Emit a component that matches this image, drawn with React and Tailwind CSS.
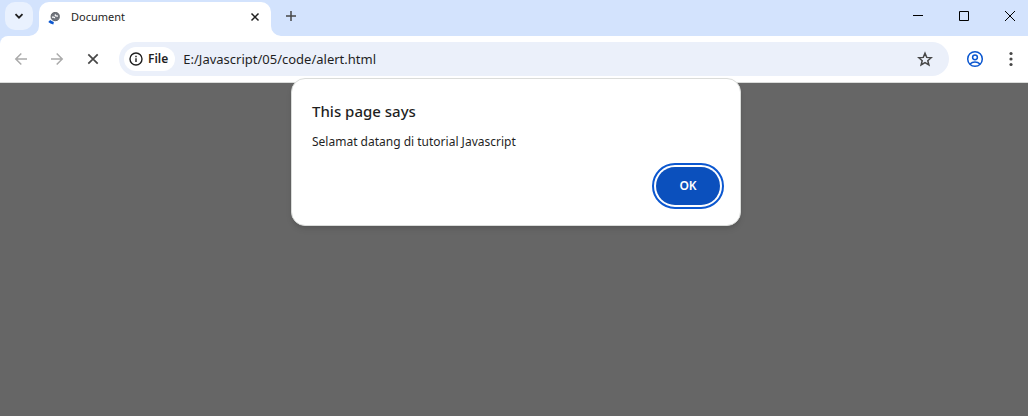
function Icon({ children, className = "size-4", box = 16 }) {
  return (
    <svg viewBox={`0 0 ${box} ${box}`} className={className} fill="none" stroke="currentColor" aria-hidden="true">
      {children}
    </svg>
  );
}

function TabStrip() {
  return (
    <header className="flex h-9 items-start bg-[#d3e3fd] pl-[5px]">
      <button aria-label="Search tabs" className="mt-0.5 flex size-7 items-center justify-center rounded-[10px] bg-[#e9f1fe] text-[#1f1f1f]">
        <Icon>
          <path d="M4.5 6.2 8 9.7l3.5-3.5" strokeWidth="1.8" />
        </Icon>
      </button>
      <div className="relative ml-1.5 mt-0.5 flex h-[34px] w-[232px] items-center rounded-t-[10px] bg-white px-2 text-[#1f1f1f]">
        <svg viewBox="0 0 10 10" className="absolute bottom-0 -left-2.5 size-2.5 fill-white" aria-hidden="true">
          <path d="M10 0v10H0A10 10 0 0 0 10 0Z" />
        </svg>
        <svg viewBox="0 0 10 10" className="absolute bottom-0 -right-2.5 size-2.5 fill-white" aria-hidden="true">
          <path d="M0 0v10h10A10 10 0 0 1 0 0Z" />
        </svg>
        <svg viewBox="0 0 16 16" className="mb-1 size-4" fill="none" aria-hidden="true">
          <circle cx="8.2" cy="7.6" r="4.1" fill="#70747c" stroke="#5f6368" />
          <path d="M5 8.2h1.6c.8 0 1.100.5 1.100 1.100M8.600 5.400c-.6.500-.6 1.300.2 1.400l2.200.4" stroke="#fff" strokeWidth="1.200" />
          <path d="M2.200 12c1 1 2.600 1.800 4.400 2.200" stroke="#0b57d0" strokeWidth="2.600" />
        </svg>
        <span className="mb-1 ml-2 flex-1 text-[11px]">Document</span>
        <button aria-label="Close tab" className="mb-1">
          <Icon>
            <path d="m4.5 4.5 7 7m0-7-7 7" strokeWidth="1.5" />
          </Icon>
        </button>
      </div>
      <button aria-label="New tab" className="ml-3 mt-2 text-[#474747]">
        <Icon>
          <path d="M8 3v10M3 8h10" strokeWidth="1.5" />
        </Icon>
      </button>
      <div className="ml-auto flex h-8 text-black">
        <button aria-label="Minimize" className="flex w-[46px] items-center justify-center">
          <Icon className="size-2.5" box={10}>
            <path d="M0 4.5h10" />
          </Icon>
        </button>
        <button aria-label="Maximize" className="flex w-[46px] items-center justify-center">
          <Icon className="size-2.5" box={10}>
            <path d="M.5.5h9v9h-9z" />
          </Icon>
        </button>
        <button aria-label="Close window" className="flex w-[41px] items-center pl-[18px]">
          <Icon className="size-2.5" box={10}>
            <path d="m0 0 10 10M10 0 0 10" />
          </Icon>
        </button>
      </div>
    </header>
  );
}

function Toolbar() {
  return (
    <div className="bg-[#d3e3fd]">
      <div className="flex h-[47px] items-center rounded-tl-lg border-b border-[#dadcda] bg-white pl-3 pr-2">
        <div className="flex gap-[18px]">
          <button aria-label="Back" className="text-[#ababab]">
            <Icon className="size-[18px]" box={18}>
              <path d="M15 9H4m5.3-5.5L3.8 9l5.5 5.5" strokeWidth="1.5" />
            </Icon>
          </button>
          <button aria-label="Forward" className="text-[#ababab]">
            <Icon className="size-[18px]" box={18}>
              <path d="M3 9h11M8.7 3.5 14.2 9l-5.5 5.5" strokeWidth="1.5" />
            </Icon>
          </button>
          <button aria-label="Stop loading" className="text-[#474747]">
            <Icon className="size-[18px]" box={18}>
              <path d="m4.3 4.3 9.4 9.4m0-9.4-9.4 9.4" strokeWidth="1.7" />
            </Icon>
          </button>
        </div>
        <div className="ml-[17px] flex h-[34px] flex-1 items-center rounded-full bg-[#ebf0fa] pl-[5px] pr-4">
          <button className="flex h-6 items-center gap-1 rounded-full bg-white pl-1 pr-[7px] text-xs font-semibold text-[#1f1f1f]">
            <Icon>
              <circle cx="8" cy="8" r="6" strokeWidth="1.4" />
              <path d="M8 7.3V11M8 4.8v1.4" strokeWidth="1.4" />
            </Icon>
            File
          </button>
          <input
            aria-label="Address"
            defaultValue="E:/Javascript/05/code/alert.html"
            className="ml-2 min-w-0 flex-1 bg-transparent pt-px text-[13px] text-[#1f1f1f] outline-none"
          />
          <button aria-label="Bookmark this page" className="text-[#474747]">
            <Icon>
              <path d="m8 2.200 1.700 4.200 4.500.3-3.400 3 1.100 4.300L8 11.600 4.100 14l1.100-4.300-3.400-3 4.500-.3Z" strokeWidth="1.5" />
            </Icon>
          </button>
        </div>
        <button aria-label="Profile" className="ml-[17px] text-[#0b57d0]">
          <Icon className="size-[18px]" box={18}>
            <circle cx="9" cy="9" r="7.3" strokeWidth="1.5" />
            <circle cx="9" cy="7.3" r="2.4" strokeWidth="1.5" />
            <path d="M4 14c1.3-1.3 3-2 5-2s3.7.7 5 2" strokeWidth="1.5" />
          </Icon>
        </button>
        <button aria-label="Menu" className="ml-[18px] text-[#474747]">
          <svg viewBox="0 0 18 18" className="size-[18px] fill-current" aria-hidden="true">
            <circle cx="9" cy="3.5" r="1.6" />
            <circle cx="9" cy="9" r="1.6" />
            <circle cx="9" cy="14.5" r="1.6" />
          </svg>
        </button>
      </div>
    </div>
  );
}

function AlertDialog() {
  return (
    <section
      role="alertdialog"
      aria-labelledby="alert-title"
      aria-describedby="alert-message"
      className="mx-auto w-[450px] max-w-full rounded-[14px] border border-[#dadcda] bg-white p-5 text-[#1f1f1f] shadow-md"
    >
      <h1 id="alert-title" className="text-[15px] leading-6 font-medium">This page says</h1>
      <p id="alert-message" className="mt-2 text-xs leading-[22px]">Selamat datang di tutorial Javascript</p>
      <div className="mt-3.5 flex justify-end">
        <button className="h-[38px] w-16 rounded-full bg-[#0b50bd] text-xs font-semibold text-white outline-2 outline-offset-2 outline-[#0b57d0]">
          OK
        </button>
      </div>
    </section>
  );
}

export default function App() {
  return (
    <div className="relative flex min-h-screen flex-col font-['Noto_Sans','Open_Sans',sans-serif]">
      <TabStrip />
      <Toolbar />
      <main className="flex-1 bg-[#666666]" />
      <div className="absolute left-1 right-0 top-[78px]">
        <AlertDialog />
      </div>
    </div>
  );
}
